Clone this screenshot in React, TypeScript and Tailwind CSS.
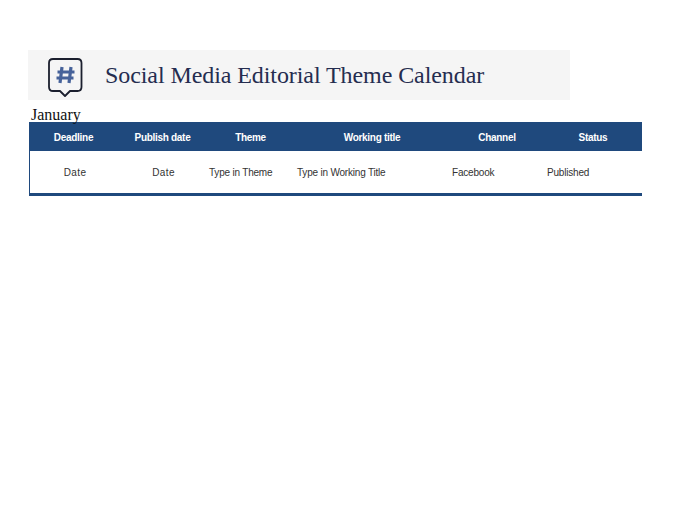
export default function App() {
  const cols = "grid grid-cols-[89px_89px_87px_156px_94px_98px] items-center";
  return (
    <div className="min-h-[520px] w-[675px] bg-white pt-[50px] pl-[28px] font-['Liberation_Sans',sans-serif]">
      <div className="flex h-[50px] w-[542px] items-center bg-[#f5f5f5]">
        <svg className="ml-[19px] h-[48px] w-[36px] shrink-0" viewBox="0 0 36 48" fill="none">
          <path d="M6 8H30.5Q34.5 8 34.5 12V36Q34.5 40 30.5 40H23L18 45L13 40H6Q2 40 2 36V12Q2 8 6 8Z" stroke="#1b1f2e" strokeWidth="1.8" strokeLinejoin="round" />
          <path d="M15 16L13 32M24 16L22 32M10.5 21H27.5M9.5 27H26.5" stroke="#46629a" strokeWidth="3.2" />
        </svg>
        <h1 className="ml-[22px] text-[24px] leading-none font-normal tracking-[-0.08px] whitespace-nowrap text-[#252d50] font-['Liberation_Serif',serif]">
          Social Media Editorial Theme Calendar
        </h1>
      </div>
      <div className="h-[22px] pl-[3px] pt-[6px] text-[16px] leading-[18px] text-[#111] font-['Liberation_Serif',serif]">January</div>
      <div className="ml-[1px] w-[613px] border-b-[3px] border-l border-[#1f497d]">
        <div className={`${cols} -ml-px h-[29px] pt-[1px] bg-[#1f497d] text-center text-[10px] font-bold tracking-[-0.3px] text-white`}>
          <div>Deadline</div>
          <div>Publish date</div>
          <div>Theme</div>
          <div>Working title</div>
          <div>Channel</div>
          <div>Status</div>
        </div>
        <div className={`${cols} -ml-px h-[42px] text-[10px] tracking-[-0.2px] text-[#333]`}>
          <div className="pl-[3px] text-center tracking-[0.4px]">Date</div>
          <div className="pl-[2px] text-center tracking-[0.4px]">Date</div>
          <div className="pl-[2px]">Type in Theme</div>
          <div className="pl-[3px]">Type in Working Title</div>
          <div className="pl-[2px]">Facebook</div>
          <div className="pl-[3px]">Published</div>
        </div>
      </div>
    </div>
  );
}
